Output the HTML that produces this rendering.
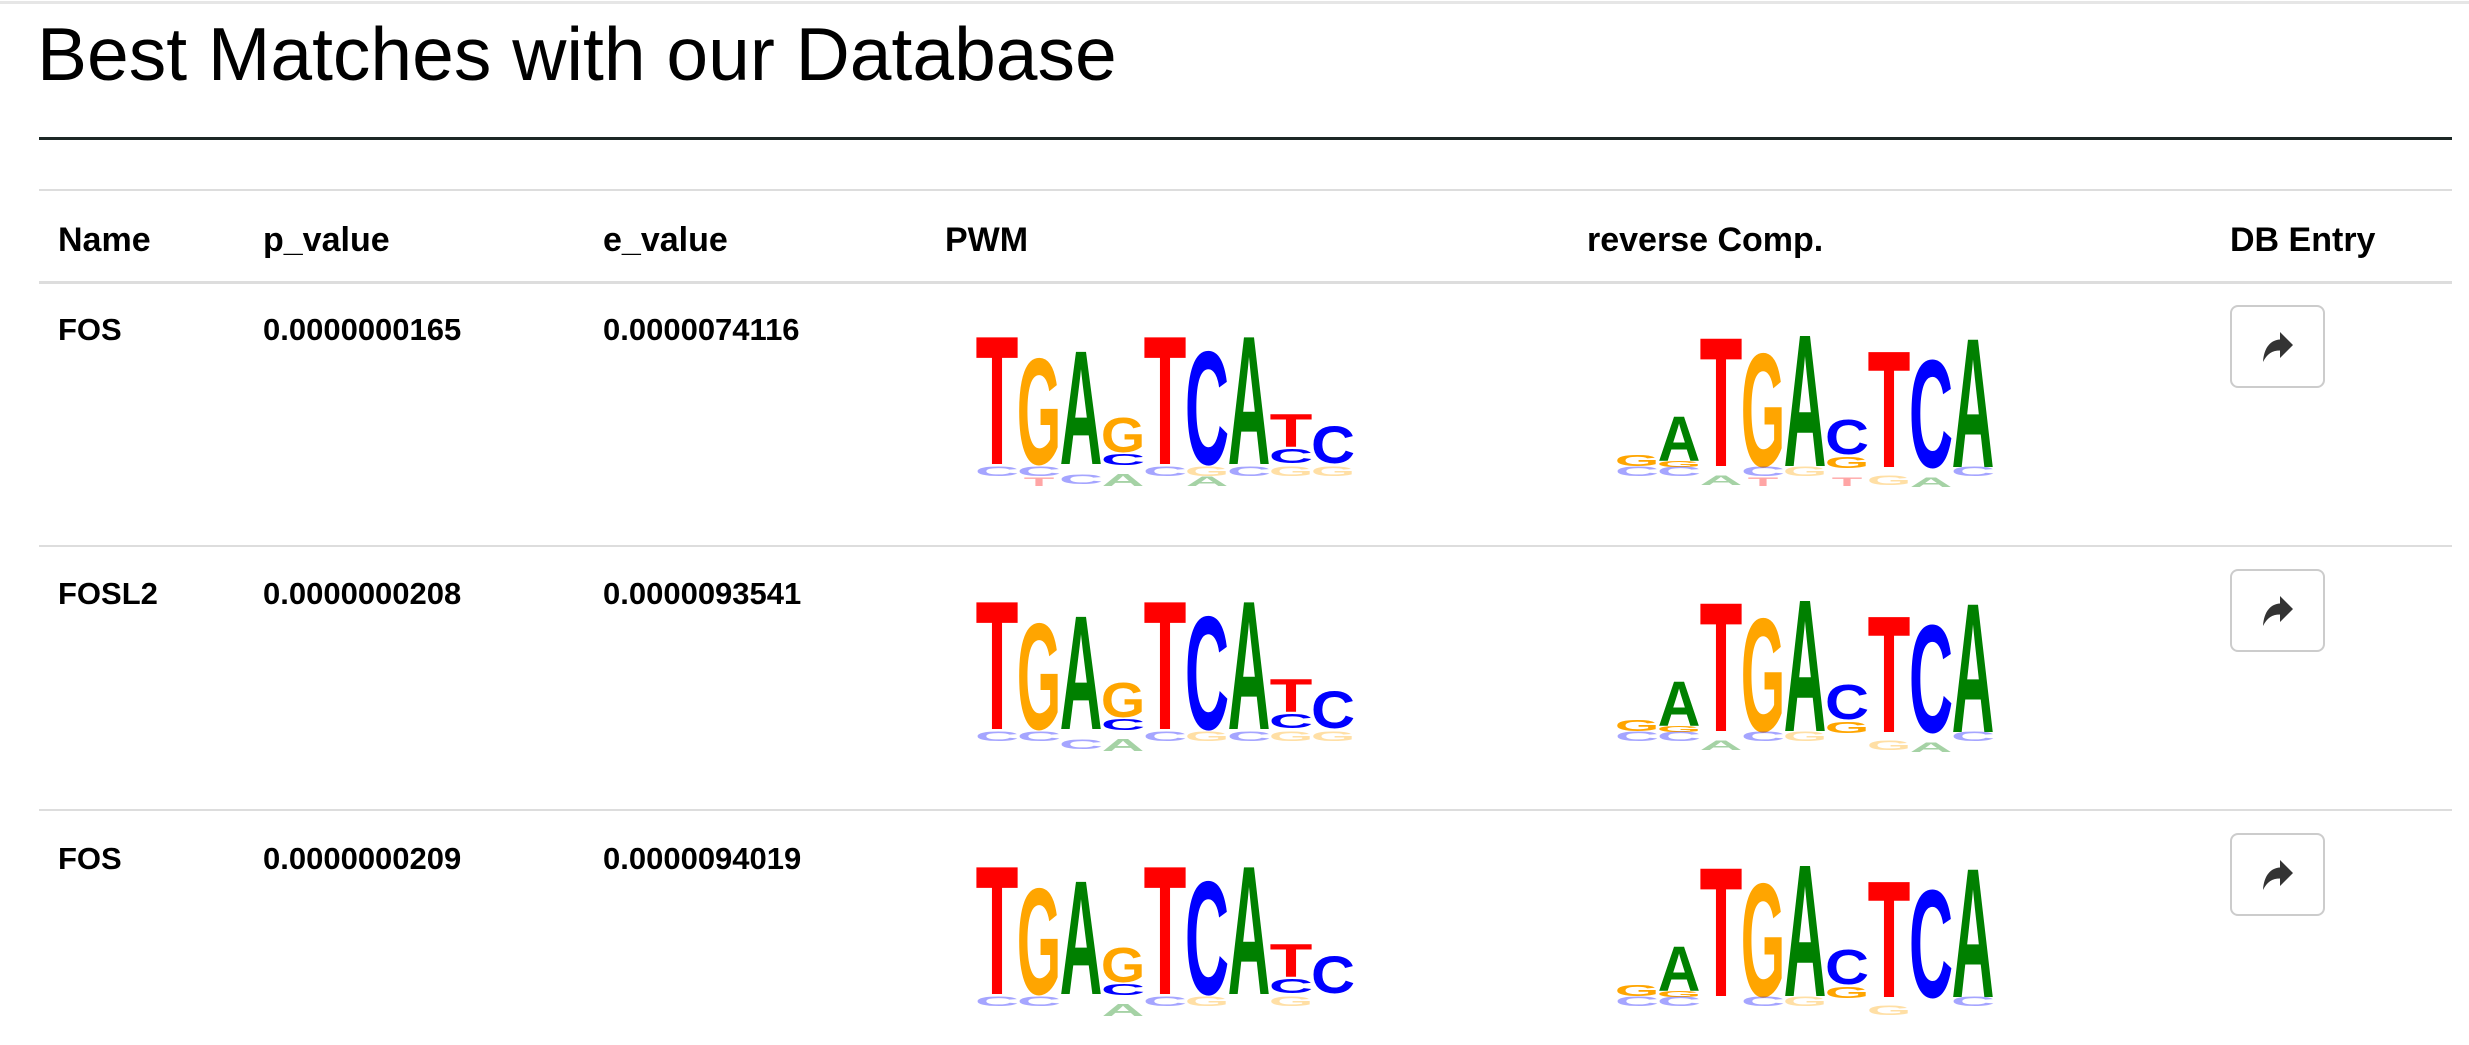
<!DOCTYPE html>
<html><head><meta charset="utf-8"><style>
body{margin:0;width:2469px;height:1021px;background:#fff;position:relative;overflow:hidden;font-family:"Liberation Sans",Arial,sans-serif;color:#000}
.a{position:absolute;line-height:1;white-space:nowrap}
.h{font-weight:bold;font-size:34px}
.r{font-weight:bold;font-size:31px}
.line{position:absolute;left:39px;width:2413px;background:#ddd}
.btn{position:absolute;left:2230px;width:91px;height:79px;border:2px solid #ccc;border-radius:8px;background:#fff}
svg text{font-family:"Liberation Sans",Arial,sans-serif;font-weight:bold;font-size:100px;text-anchor:middle}
.logo{position:absolute;width:420px;height:200px}
.f{opacity:.35}
</style></head><body>
<div style="position:absolute;left:0;top:1px;width:2469px;height:3px;background:#e6e6e6"></div>
<div class="a" style="left:37px;top:17px;font-size:75px">Best Matches with our Database</div>
<div style="position:absolute;left:39px;top:137px;width:2413px;height:3px;background:#1c2826"></div>
<div class="line" style="top:189px;height:2px"></div>
<div class="a h" style="left:58px;top:223px">Name</div>
<div class="a h" style="left:263px;top:223px">p_value</div>
<div class="a h" style="left:603px;top:223px">e_value</div>
<div class="a h" style="left:945px;top:223px">PWM</div>
<div class="a h" style="left:1587px;top:223px">reverse Comp.</div>
<div class="a h" style="left:2230px;top:223px">DB Entry</div>
<div class="line" style="top:281px;height:3px"></div>

<div class="a r" style="left:58px;top:314px">FOS</div>
<div class="a r" style="left:263px;top:314px">0.0000000165</div>
<div class="a r" style="left:603px;top:314px">0.0000074116</div>
<div class="line" style="top:545px;height:2px"></div>
<div class="a r" style="left:58px;top:578px">FOSL2</div>
<div class="a r" style="left:263px;top:578px">0.0000000208</div>
<div class="a r" style="left:603px;top:578px">0.0000093541</div>
<div class="line" style="top:809px;height:2px"></div>
<div class="a r" style="left:58px;top:843px">FOS</div>
<div class="a r" style="left:263px;top:843px">0.0000000209</div>
<div class="a r" style="left:603px;top:843px">0.0000094019</div>

<div class="btn" style="top:305px"><svg width="91" height="79" viewBox="0 0 91 79"><path d="M31 55 C32 40 39 33 48 32.5 V25 L61 38 L48 51 V43.5 C40 43.5 35 47 31 55 Z" fill="#333"/></svg></div>
<div class="btn" style="top:569px"><svg width="91" height="79" viewBox="0 0 91 79"><path d="M31 55 C32 40 39 33 48 32.5 V25 L61 38 L48 51 V43.5 C40 43.5 35 47 31 55 Z" fill="#333"/></svg></div>
<div class="btn" style="top:833px"><svg width="91" height="79" viewBox="0 0 91 79"><path d="M31 55 C32 40 39 33 48 32.5 V25 L61 38 L48 51 V43.5 C40 43.5 35 47 31 55 Z" fill="#333"/></svg></div>

<!-- PWM logos -->
<div class="logo" style="left:960px;top:310px"><svg width="420" height="200">
<text transform="translate(37,154) scale(0.70,1.84)" fill="#f00">T</text>
<text transform="translate(79,154) scale(0.57,1.52)" fill="#ffa500">G</text>
<text transform="translate(121,154) scale(0.59,1.63)" fill="#008000">A</text>
<text transform="translate(163,142) scale(0.57,0.49)" fill="#ffa500">G</text>
<text transform="translate(163,155) scale(0.61,0.16)" fill="#00f">C</text>
<text transform="translate(205,154) scale(0.70,1.84)" fill="#f00">T</text>
<text transform="translate(247,154) scale(0.61,1.62)" fill="#00f">C</text>
<text transform="translate(289,154) scale(0.59,1.84)" fill="#008000">A</text>
<text transform="translate(331,137) scale(0.70,0.47)" fill="#f00">T</text>
<text transform="translate(331,153) scale(0.61,0.20)" fill="#00f">C</text>
<text transform="translate(373,153) scale(0.61,0.53)" fill="#00f">C</text>
<g class="f">
<text transform="translate(37,166) scale(0.61,0.14)" fill="#00f">C</text>
<text transform="translate(79,166) scale(0.61,0.14)" fill="#00f">C</text>
<text transform="translate(79,176) scale(0.5,0.12)" fill="#f00">T</text>
<text transform="translate(121,174) scale(0.61,0.14)" fill="#00f">C</text>
<text transform="translate(163,176) scale(0.59,0.18)" fill="#008000">A</text>
<text transform="translate(205,166) scale(0.61,0.14)" fill="#00f">C</text>
<text transform="translate(247,166) scale(0.57,0.14)" fill="#ffa500">G</text>
<text transform="translate(247,176) scale(0.59,0.14)" fill="#008000">A</text>
<text transform="translate(289,166) scale(0.61,0.14)" fill="#00f">C</text>
<text transform="translate(331,166) scale(0.57,0.14)" fill="#ffa500">G</text>
<text transform="translate(373,166) scale(0.57,0.14)" fill="#ffa500">G</text>
</g></svg></div>
<div class="logo" style="left:960px;top:575px"><svg width="420" height="200">
<text transform="translate(37,154) scale(0.70,1.84)" fill="#f00">T</text>
<text transform="translate(79,154) scale(0.57,1.52)" fill="#ffa500">G</text>
<text transform="translate(121,154) scale(0.59,1.63)" fill="#008000">A</text>
<text transform="translate(163,142) scale(0.57,0.49)" fill="#ffa500">G</text>
<text transform="translate(163,155) scale(0.61,0.16)" fill="#00f">C</text>
<text transform="translate(205,154) scale(0.70,1.84)" fill="#f00">T</text>
<text transform="translate(247,154) scale(0.61,1.62)" fill="#00f">C</text>
<text transform="translate(289,154) scale(0.59,1.84)" fill="#008000">A</text>
<text transform="translate(331,137) scale(0.70,0.47)" fill="#f00">T</text>
<text transform="translate(331,153) scale(0.61,0.20)" fill="#00f">C</text>
<text transform="translate(373,153) scale(0.61,0.53)" fill="#00f">C</text>
<g class="f">
<text transform="translate(37,166) scale(0.61,0.14)" fill="#00f">C</text>
<text transform="translate(79,166) scale(0.61,0.14)" fill="#00f">C</text>
<text transform="translate(121,174) scale(0.61,0.14)" fill="#00f">C</text>
<text transform="translate(163,176) scale(0.59,0.18)" fill="#008000">A</text>
<text transform="translate(205,166) scale(0.61,0.14)" fill="#00f">C</text>
<text transform="translate(247,166) scale(0.57,0.14)" fill="#ffa500">G</text>
<text transform="translate(289,166) scale(0.61,0.14)" fill="#00f">C</text>
<text transform="translate(331,166) scale(0.57,0.14)" fill="#ffa500">G</text>
<text transform="translate(373,166) scale(0.57,0.14)" fill="#ffa500">G</text>
</g></svg></div>
<div class="logo" style="left:960px;top:840px"><svg width="420" height="200">
<text transform="translate(37,154) scale(0.70,1.84)" fill="#f00">T</text>
<text transform="translate(79,154) scale(0.57,1.52)" fill="#ffa500">G</text>
<text transform="translate(121,154) scale(0.59,1.63)" fill="#008000">A</text>
<text transform="translate(163,142) scale(0.57,0.49)" fill="#ffa500">G</text>
<text transform="translate(163,155) scale(0.61,0.16)" fill="#00f">C</text>
<text transform="translate(205,154) scale(0.70,1.84)" fill="#f00">T</text>
<text transform="translate(247,154) scale(0.61,1.62)" fill="#00f">C</text>
<text transform="translate(289,154) scale(0.59,1.84)" fill="#008000">A</text>
<text transform="translate(331,137) scale(0.70,0.47)" fill="#f00">T</text>
<text transform="translate(331,153) scale(0.61,0.20)" fill="#00f">C</text>
<text transform="translate(373,153) scale(0.61,0.53)" fill="#00f">C</text>
<g class="f">
<text transform="translate(37,166) scale(0.61,0.14)" fill="#00f">C</text>
<text transform="translate(79,166) scale(0.61,0.14)" fill="#00f">C</text>
<text transform="translate(163,176) scale(0.59,0.18)" fill="#008000">A</text>
<text transform="translate(205,166) scale(0.61,0.14)" fill="#00f">C</text>
<text transform="translate(247,166) scale(0.57,0.14)" fill="#ffa500">G</text>
<text transform="translate(331,166) scale(0.57,0.14)" fill="#ffa500">G</text>
</g></svg></div>

<!-- reverse logos -->
<div class="logo" style="left:1600px;top:310px"><svg width="420" height="200">
<text transform="translate(37,156) scale(0.57,0.16)" fill="#ffa500">G</text>
<text transform="translate(79,151) scale(0.59,0.64)" fill="#008000">A</text>
<text transform="translate(79,157) scale(0.57,0.08)" fill="#ffa500">G</text>
<text transform="translate(121,156) scale(0.70,1.85)" fill="#f00">T</text>
<text transform="translate(163,156) scale(0.57,1.62)" fill="#ffa500">G</text>
<text transform="translate(205,156) scale(0.59,1.89)" fill="#008000">A</text>
<text transform="translate(247,144) scale(0.61,0.49)" fill="#00f">C</text>
<text transform="translate(247,158) scale(0.57,0.16)" fill="#ffa500">G</text>
<text transform="translate(289,157) scale(0.70,1.67)" fill="#f00">T</text>
<text transform="translate(331,157) scale(0.61,1.54)" fill="#00f">C</text>
<text transform="translate(373,157) scale(0.59,1.85)" fill="#008000">A</text>
<g class="f">
<text transform="translate(37,166) scale(0.61,0.14)" fill="#00f">C</text>
<text transform="translate(79,166) scale(0.61,0.14)" fill="#00f">C</text>
<text transform="translate(121,175) scale(0.59,0.14)" fill="#008000">A</text>
<text transform="translate(163,166) scale(0.61,0.14)" fill="#00f">C</text>
<text transform="translate(163,176) scale(0.5,0.12)" fill="#f00">T</text>
<text transform="translate(205,166) scale(0.57,0.14)" fill="#ffa500">G</text>
<text transform="translate(247,176) scale(0.5,0.12)" fill="#f00">T</text>
<text transform="translate(289,175) scale(0.57,0.14)" fill="#ffa500">G</text>
<text transform="translate(331,177) scale(0.59,0.14)" fill="#008000">A</text>
<text transform="translate(373,166) scale(0.61,0.14)" fill="#00f">C</text>
</g></svg></div>
<div class="logo" style="left:1600px;top:575px"><svg width="420" height="200">
<text transform="translate(37,156) scale(0.57,0.16)" fill="#ffa500">G</text>
<text transform="translate(79,151) scale(0.59,0.64)" fill="#008000">A</text>
<text transform="translate(79,157) scale(0.57,0.08)" fill="#ffa500">G</text>
<text transform="translate(121,156) scale(0.70,1.85)" fill="#f00">T</text>
<text transform="translate(163,156) scale(0.57,1.62)" fill="#ffa500">G</text>
<text transform="translate(205,156) scale(0.59,1.89)" fill="#008000">A</text>
<text transform="translate(247,144) scale(0.61,0.49)" fill="#00f">C</text>
<text transform="translate(247,158) scale(0.57,0.16)" fill="#ffa500">G</text>
<text transform="translate(289,157) scale(0.70,1.67)" fill="#f00">T</text>
<text transform="translate(331,157) scale(0.61,1.54)" fill="#00f">C</text>
<text transform="translate(373,157) scale(0.59,1.85)" fill="#008000">A</text>
<g class="f">
<text transform="translate(37,166) scale(0.61,0.14)" fill="#00f">C</text>
<text transform="translate(79,166) scale(0.61,0.14)" fill="#00f">C</text>
<text transform="translate(121,175) scale(0.59,0.14)" fill="#008000">A</text>
<text transform="translate(163,166) scale(0.61,0.14)" fill="#00f">C</text>
<text transform="translate(205,166) scale(0.57,0.14)" fill="#ffa500">G</text>
<text transform="translate(289,175) scale(0.57,0.14)" fill="#ffa500">G</text>
<text transform="translate(331,177) scale(0.59,0.14)" fill="#008000">A</text>
<text transform="translate(373,166) scale(0.61,0.14)" fill="#00f">C</text>
</g></svg></div>
<div class="logo" style="left:1600px;top:840px"><svg width="420" height="200">
<text transform="translate(37,156) scale(0.57,0.16)" fill="#ffa500">G</text>
<text transform="translate(79,151) scale(0.59,0.64)" fill="#008000">A</text>
<text transform="translate(79,157) scale(0.57,0.08)" fill="#ffa500">G</text>
<text transform="translate(121,156) scale(0.70,1.85)" fill="#f00">T</text>
<text transform="translate(163,156) scale(0.57,1.62)" fill="#ffa500">G</text>
<text transform="translate(205,156) scale(0.59,1.89)" fill="#008000">A</text>
<text transform="translate(247,144) scale(0.61,0.49)" fill="#00f">C</text>
<text transform="translate(247,158) scale(0.57,0.16)" fill="#ffa500">G</text>
<text transform="translate(289,157) scale(0.70,1.67)" fill="#f00">T</text>
<text transform="translate(331,157) scale(0.61,1.54)" fill="#00f">C</text>
<text transform="translate(373,157) scale(0.59,1.85)" fill="#008000">A</text>
<g class="f">
<text transform="translate(37,166) scale(0.61,0.14)" fill="#00f">C</text>
<text transform="translate(79,166) scale(0.61,0.14)" fill="#00f">C</text>
<text transform="translate(163,166) scale(0.61,0.14)" fill="#00f">C</text>
<text transform="translate(205,166) scale(0.57,0.14)" fill="#ffa500">G</text>
<text transform="translate(289,175) scale(0.57,0.14)" fill="#ffa500">G</text>
<text transform="translate(373,166) scale(0.61,0.14)" fill="#00f">C</text>
</g></svg></div>
</body></html>
